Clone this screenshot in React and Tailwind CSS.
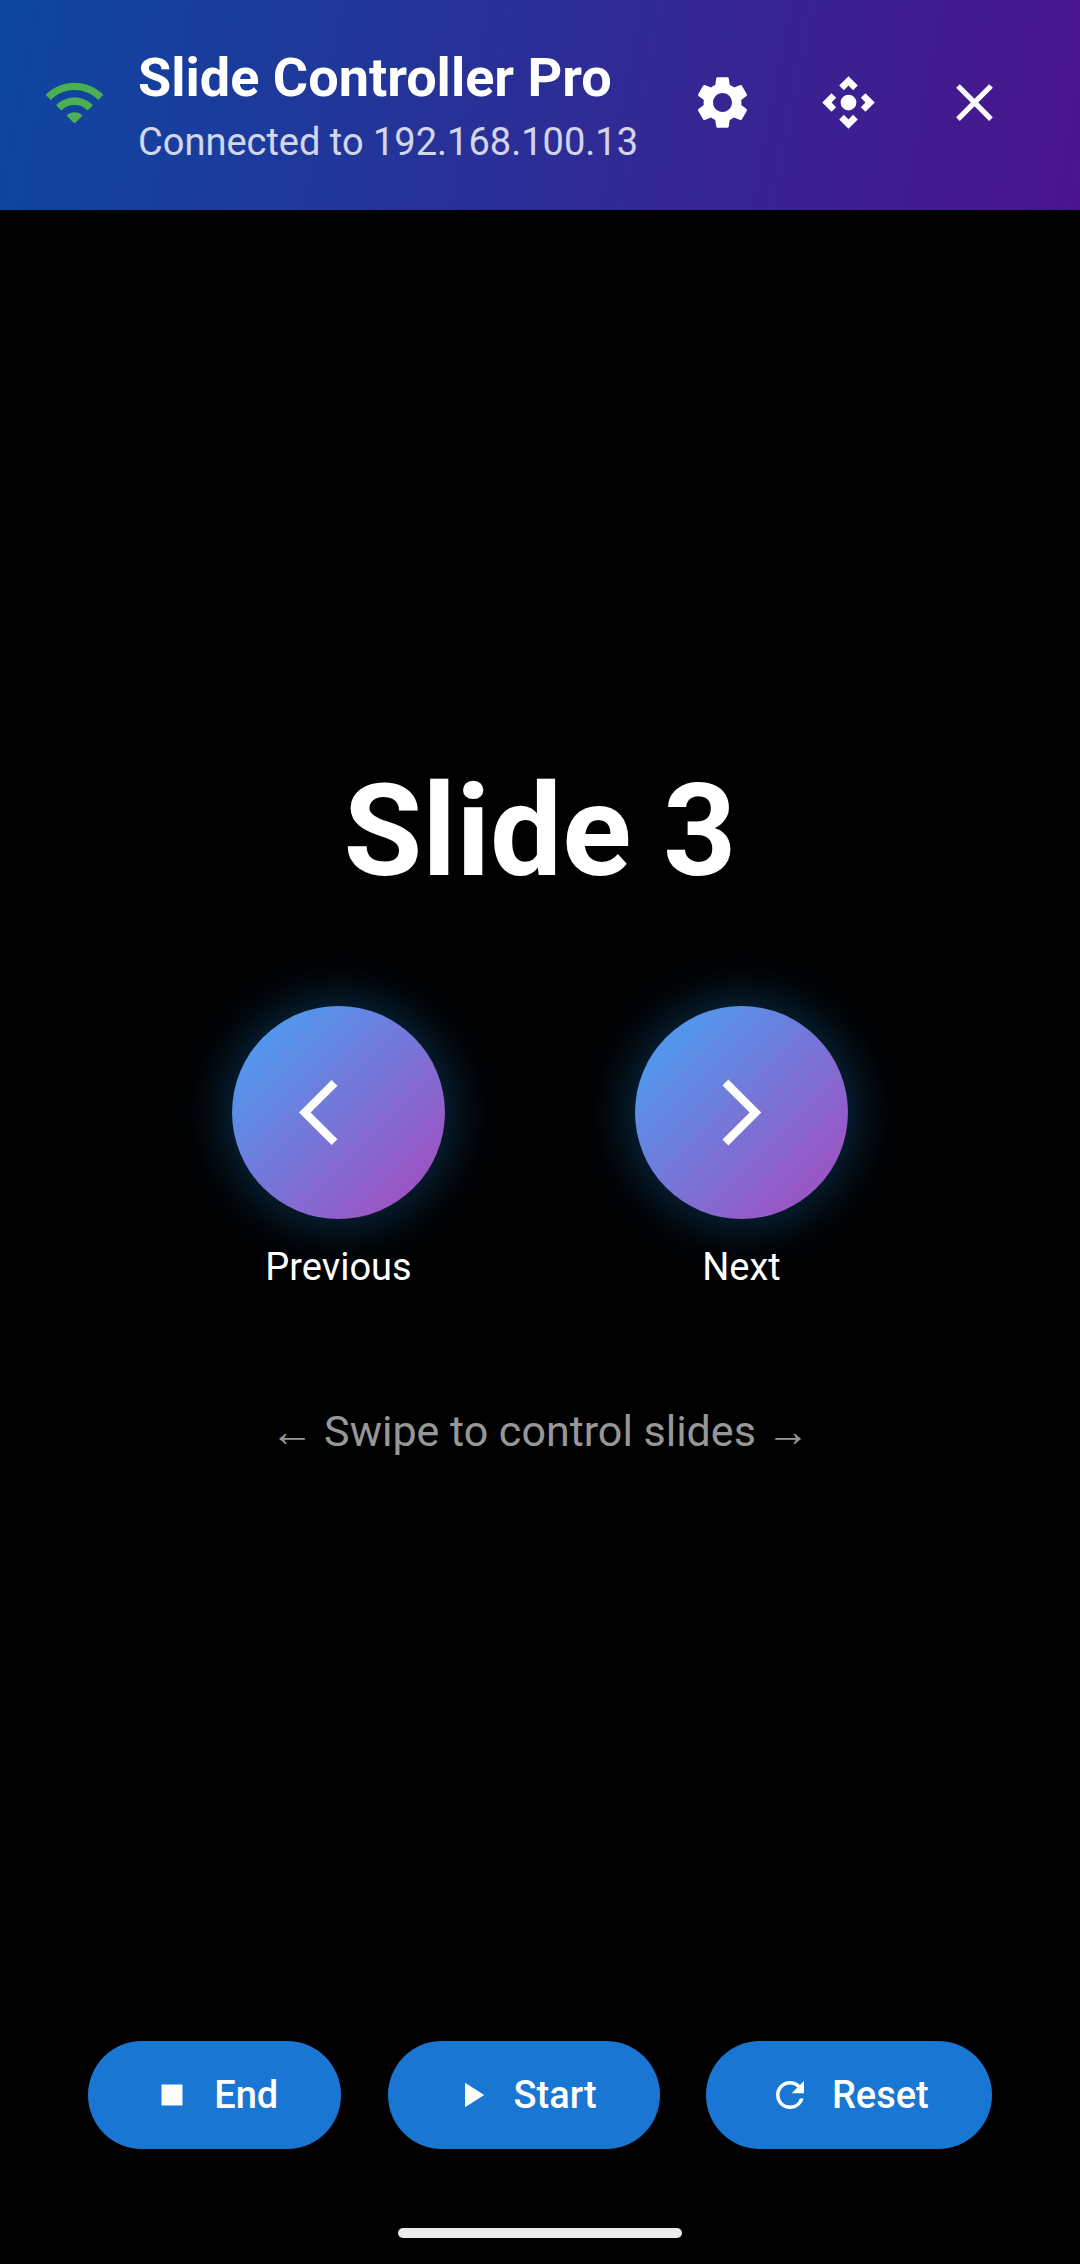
import {
  MdWifi,
  MdSettings,
  MdControlCamera,
  MdClose,
  MdArrowBackIos,
  MdArrowForwardIos,
  MdStop,
  MdPlayArrow,
  MdRefresh,
} from "react-icons/md";

function HeaderAction({ icon: Icon, label }) {
  return (
    <button type="button" aria-label={label} className="flex size-[126px] items-center justify-center">
      <Icon className="size-[63px]" />
    </button>
  );
}

function SlideButton({ icon: Icon, label }) {
  return (
    <div className="flex flex-col items-center gap-[22px]">
      <button
        type="button"
        aria-label={`${label} slide`}
        className="flex size-[213px] items-center justify-center rounded-full bg-[linear-gradient(135deg,#42a5f5,#ab47bc)] shadow-[0_0_56px_4px_rgba(33,150,243,0.34)]"
      >
        <Icon className="size-[79px]" />
      </button>
      <span className="text-[38px] leading-[52px]">{label}</span>
    </div>
  );
}

function PillButton({ icon: Icon, label }) {
  return (
    <button
      type="button"
      className="flex h-[108px] items-center gap-[21px] rounded-full bg-[#1976d2] px-[63px] text-[38px] leading-[52px] font-medium"
    >
      <Icon className="size-[42px]" />
      {label}
    </button>
  );
}

export default function App() {
  return (
    <div className="flex min-h-screen flex-col bg-black font-['Roboto','Liberation_Sans',sans-serif] text-white">
      <header className="flex h-[210px] items-center bg-[linear-gradient(101deg,#0d47a1,#4a148c)] px-[43px] pb-1.5">
        <MdWifi className="size-[63px] shrink-0 text-[#4caf50]" />
        <div className="ml-8 min-w-0 flex-1 pt-3 whitespace-nowrap">
          <h1 className="text-[54px] leading-[68px] font-bold">Slide Controller Pro</h1>
          <p className="text-[38px] leading-[60px] text-white/80">Connected to 192.168.100.13</p>
        </div>
        <nav className="flex shrink-0" aria-label="Controls">
          <HeaderAction icon={MdSettings} label="Settings" />
          <HeaderAction icon={MdControlCamera} label="Pointer control" />
          <HeaderAction icon={MdClose} label="Disconnect" />
        </nav>
      </header>

      <main className="flex flex-1 flex-col justify-center px-[42px] pb-2.5 text-center">
        <h2 className="text-[128px] leading-[148px] font-bold">Slide 3</h2>
        <div className="mt-[101px] flex justify-evenly">
          <SlideButton icon={MdArrowBackIos} label="Previous" />
          <SlideButton icon={MdArrowForwardIos} label="Next" />
        </div>
        <p className="mt-[107px] text-[43px] leading-[63px] text-white/60">← Swipe to control slides →</p>
      </main>

      <footer className="px-[42px] pt-[21px] pb-[26px]">
        <div className="flex justify-evenly">
          <PillButton icon={MdStop} label="End" />
          <PillButton icon={MdPlayArrow} label="Start" />
          <PillButton icon={MdRefresh} label="Reset" />
        </div>
        <div className="mx-auto mt-[79px] h-[10px] w-[284px] rounded-full bg-[#ebebeb]" />
      </footer>
    </div>
  );
}
